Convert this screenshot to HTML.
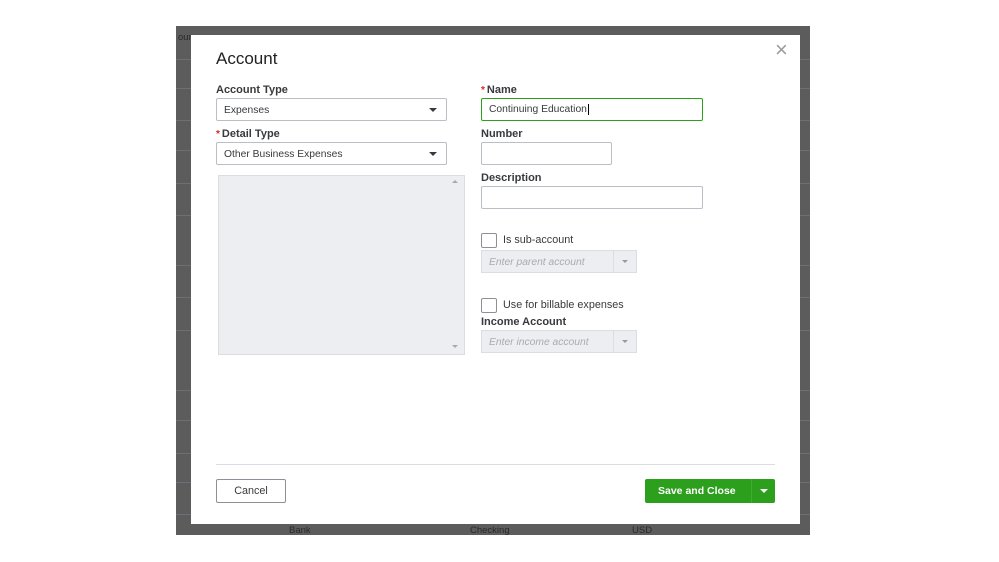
<!DOCTYPE html>
<html><head><style>
*{box-sizing:border-box;margin:0;padding:0}
body{width:999px;height:562px;background:#fff;position:relative;overflow:hidden;font-family:"Liberation Sans",sans-serif;color:#393a3d}
.bg{position:absolute;left:176px;top:26px;width:634px;height:509px;background:#5c5c5c}
.row{position:absolute;left:176px;width:634px;height:1px;background:#6a6f78}
.modal{position:absolute;left:191px;top:35px;width:609px;height:489px;background:#fff}
.abs{position:absolute}
.lbl{font-size:11px;font-weight:bold;color:#393a3d}
.req{color:#d52b1e;font-size:10px;margin-right:2px}
.sel{border:1px solid #babec5;border-radius:2px;height:23px;font-size:10.3px;color:#393a3d;padding:6px 7px 0;background:#fff}
.sel .ar{position:absolute;right:9px;top:9px;width:0;height:0;border-left:4px solid transparent;border-right:4px solid transparent;border-top:4px solid #393a3d}
.inp{border:1px solid #babec5;border-radius:2px;height:23px;background:#fff}
.dis{border:1px solid #dcdde0;background:#eceef1;height:23px;font-size:10.3px;font-style:italic;color:#a8abb0;padding:6px 7px 0}
.dis .sep{position:absolute;right:22px;top:0;width:1px;height:21px;background:#dcdde0}
.dis .ar{position:absolute;right:8px;top:9px;border-left:3px solid transparent;border-right:3px solid transparent;border-top:3px solid #999}
.cb{width:16px;height:15px;border:1px solid #8d9096;border-radius:2px;background:#fff}
.bgt{position:absolute;font-size:9.5px;color:#2a2a2a}
</style></head><body>
<div class="bg"></div>
<div class="row" style="top:59px"></div><div class="row" style="top:88px"></div><div class="row" style="top:120px"></div><div class="row" style="top:150px"></div><div class="row" style="top:183px"></div><div class="row" style="top:215px"></div><div class="row" style="top:265px"></div><div class="row" style="top:297px"></div><div class="row" style="top:330px"></div><div class="row" style="top:390px"></div><div class="row" style="top:420px"></div><div class="row" style="top:453px"></div><div class="row" style="top:482px"></div><div class="row" style="top:514px"></div>
<div class="bgt" style="left:178px;top:32px">our</div>
<div class="bgt" style="left:289px;top:525px">Bank</div>
<div class="bgt" style="left:470px;top:525px">Checking</div>
<div class="bgt" style="left:632px;top:525px">USD</div>
<div class="modal">
<div class="abs" style="left:25px;top:14px;font-size:17px;color:#222">Account</div>
<div class="abs" style="left:584px;top:2px;font-size:22px;color:#9a9ca0">×</div>
<div class="abs lbl" style="left:25px;top:49px">Account Type</div>
<div class="abs sel" style="left:25px;top:63px;width:231px">Expenses<span class="ar"></span></div>
<div class="abs lbl" style="left:25px;top:93px"><span class="req">*</span>Detail Type</div>
<div class="abs sel" style="left:25px;top:107px;width:231px">Other Business Expenses<span class="ar"></span></div>
<div class="abs" style="left:27px;top:140px;width:247px;height:180px;background:#eceef1;border:1px solid #dcdde0"></div>
<div class="abs" style="left:261px;top:145px;border-left:3px solid transparent;border-right:3px solid transparent;border-bottom:3px solid #aaa"></div>
<div class="abs" style="left:261px;top:310px;border-left:3px solid transparent;border-right:3px solid transparent;border-top:3px solid #aaa"></div>
<div class="abs lbl" style="left:290px;top:49px"><span class="req">*</span>Name</div>
<div class="abs" style="left:290px;top:63px;width:222px;height:23px;border:1px solid #2ca01c;border-radius:2px;font-size:10.3px;padding:5px 7px 0">Continuing Education<span style="border-left:1px solid #000;margin-left:1px"></span></div>
<div class="abs lbl" style="left:290px;top:93px">Number</div>
<div class="abs inp" style="left:290px;top:107px;width:131px"></div>
<div class="abs lbl" style="left:290px;top:137px">Description</div>
<div class="abs inp" style="left:290px;top:151px;width:222px"></div>
<div class="abs cb" style="left:290px;top:198px"></div>
<div class="abs" style="left:312px;top:199px;font-size:10.8px">Is sub-account</div>
<div class="abs dis" style="left:290px;top:215px;width:156px">Enter parent account<span class="sep"></span><span class="ar"></span></div>
<div class="abs cb" style="left:290px;top:263px"></div>
<div class="abs" style="left:312px;top:264px;font-size:10.8px">Use for billable expenses</div>
<div class="abs lbl" style="left:290px;top:281px">Income Account</div>
<div class="abs dis" style="left:290px;top:295px;width:156px">Enter income account<span class="sep"></span><span class="ar"></span></div>
<div class="abs" style="left:25px;top:429px;width:559px;height:1px;background:#dcdde0"></div>
<div class="abs" style="left:25px;top:444px;width:70px;height:24px;border:1px solid #8d9096;border-radius:2px;font-size:10.8px;text-align:center;line-height:22px;color:#393a3d">Cancel</div>
<div class="abs" style="left:454px;top:444px;width:130px;height:24px;background:#2ca01c;border-radius:2px;color:#fff;font-size:10.5px;font-weight:bold;line-height:24px;padding-left:13px">Save and Close</div>
<div class="abs" style="left:560px;top:444px;width:1px;height:24px;background:#3cb02c"></div>
<div class="abs" style="left:569px;top:454px;border-left:4px solid transparent;border-right:4px solid transparent;border-top:4px solid #fff"></div>
</div>
</body></html>
